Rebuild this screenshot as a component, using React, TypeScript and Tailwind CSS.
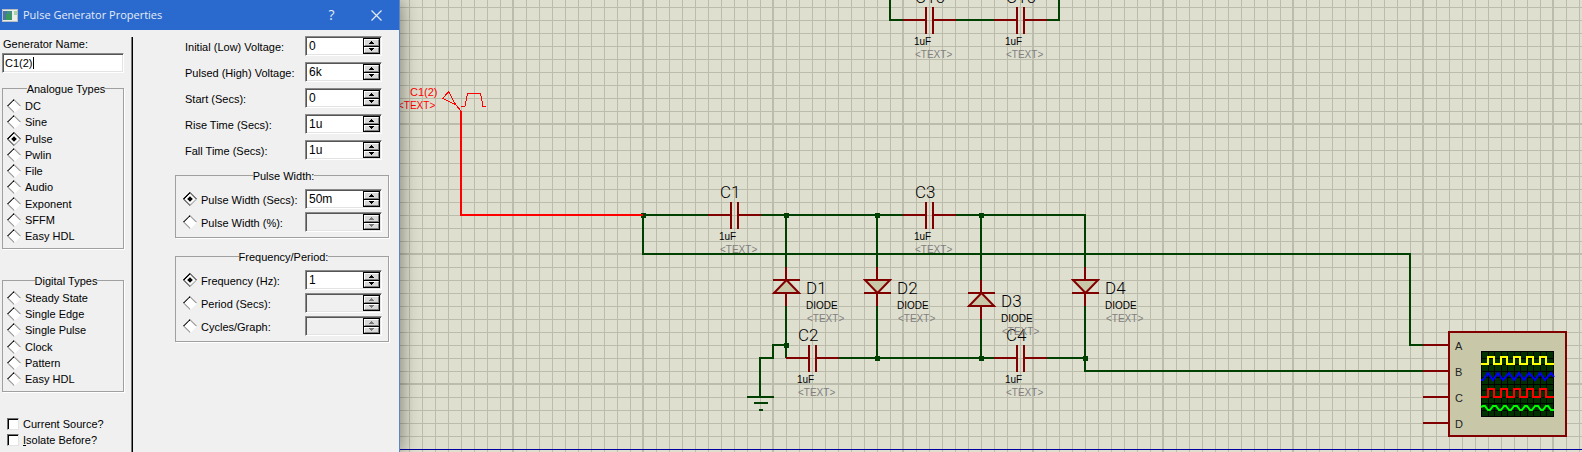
import React, { useId } from 'react';

const FACE = "font-['Liberation_Sans',Arial,sans-serif]";

/* ---------- dialog controls ---------- */

const sunken =
  'border border-t-[#8a8a8a] border-l-[#8a8a8a] border-r-white border-b-white shadow-[inset_1px_1px_0_#555,inset_-1px_-1px_0_#e3e3e3]';

function SpinButton({ up, disabled, label }: { up?: boolean; disabled?: boolean; label: string }) {
  return (
    <button
      type="button"
      aria-label={label}
      disabled={disabled}
      className="flex flex-1 items-center justify-center border border-t-white border-l-white border-r-[#808080] border-b-[#808080] bg-[#d8d8d8]"
    >
      <svg width="7" height="3" viewBox="0 0 7 3" shapeRendering="crispEdges" className={disabled ? 'text-[#777]' : 'text-black'}>
        <path
          d={up ? 'M3 0H4V1H5V2H6V3H1V2H2V1H3Z' : 'M1 0H6V1H5V2H4V3H3V2H2V1H1Z'}
          fill="currentColor"
        />
      </svg>
    </button>
  );
}

function SpinBox({ id, value, disabled }: { id: string; value?: string; disabled?: boolean }) {
  return (
    <div className={`flex h-5 w-[77px] shrink-0 p-px ${sunken} ${disabled ? 'bg-[#f0f0f0]' : 'bg-white'}`}>
      <input
        id={id}
        type="text"
        defaultValue={value}
        disabled={disabled}
        className="min-w-0 flex-1 bg-transparent pb-px pl-0.5 text-[12px] outline-none"
      />
      <div className="flex w-[17px] flex-col gap-px border border-black bg-black">
        <SpinButton up disabled={disabled} label="Increase" />
        <SpinButton disabled={disabled} label="Decrease" />
      </div>
    </div>
  );
}

function Diamond({ id, name, checked }: { id: string; name: string; checked?: boolean }) {
  return (
    <input
      id={id}
      type="radio"
      name={name}
      defaultChecked={checked}
      className="size-[10px] shrink-0 rotate-45 appearance-none border border-t-[#909090] border-r-white border-b-[#909090] border-l-black bg-white checked:bg-black checked:shadow-[inset_0_0_0_2px_#fff]"
    />
  );
}

function Group({ title, className, children }: { title: string; className: string; children: React.ReactNode }) {
  return (
    <fieldset className={`min-w-0 border border-[#a0a0a0] shadow-[1px_1px_0_#fff] ${className}`}>
      <legend className="mx-auto h-[14px] leading-[16px]">{title}</legend>
      {children}
    </fieldset>
  );
}

function TypeGroup({ title, types, selected, className, listClass }: { title: string; types: string[]; selected?: string; className: string; listClass: string }) {
  const id = useId();
  return (
    <Group title={title} className={`pt-[3px] pb-1 pl-1.5 ${className}`}>
      <div className={`flex flex-col justify-between ${listClass}`}>
        {types.map((t, i) => (
          <div key={t} className="flex h-4 items-center gap-1.5">
            <Diamond id={`${id}${i}`} name="generator-type" checked={t === selected} />
            <label htmlFor={`${id}${i}`}>{t}</label>
          </div>
        ))}
      </div>
    </Group>
  );
}

function ValueRow({ label, value }: { label: string; value: string }) {
  const id = useId();
  return (
    <div className="flex items-center justify-between pr-[7px] pl-[10px]">
      <label htmlFor={id} className="pt-0.5">{label}</label>
      <SpinBox id={id} value={value} />
    </div>
  );
}

function ChoiceGroup({ title, name, className, rows }: { title: string; name: string; className: string; rows: [string, string?][] }) {
  const id = useId();
  return (
    <Group title={title} className={`pt-[7px] pr-1.5 pb-[5px] pl-[9px] ${className}`}>
      <div className="flex flex-col gap-[3px]">
        {rows.map(([label, value], i) => (
          <div key={label} className="flex items-center">
            <Diamond id={`${id}r${i}`} name={name} checked={value !== undefined} />
            <label htmlFor={`${id}r${i}`} className="flex-1 pt-0.5 pl-1.5">
              {label}
            </label>
            <SpinBox id={`${id}v${i}`} value={value} disabled={value === undefined} />
          </div>
        ))}
      </div>
    </Group>
  );
}

function Check({ children }: { children: React.ReactNode }) {
  return (
    <label className="flex h-4 items-center gap-1">
      <input
        type="checkbox"
        className="size-3 appearance-none border border-t-[#707070] border-r-[#e3e3e3] border-b-[#e3e3e3] border-l-[#707070] bg-white shadow-[inset_1px_1px_0_#000]"
      />
      <span>{children}</span>
    </label>
  );
}

function Dialog() {
  return (
    <section
      className={`z-10 flex w-[400px] shrink-0 flex-col border-r border-[#5f86c4] bg-[#f0f0f0] text-[11px] leading-[14px] text-black shadow-[0_0_18px_rgba(0,0,0,0.5)] ${FACE}`}
    >
      <header className="flex h-[30px] shrink-0 items-center bg-[#2a69cd] pl-0.5 font-['Open_Sans','Noto_Sans',sans-serif] text-[11px] text-[#e4ecf8]">
        <svg width="16" height="13" viewBox="0 0 16 13" shapeRendering="crispEdges">
          <rect width="16" height="13" fill="#b9bfc0" />
          <rect x="1" y="1" width="14" height="11" fill="#eceee9" />
          <rect x="1" y="2" width="9" height="9" fill="#3f8f86" />
          <rect x="1" y="2" width="4" height="9" fill="#4b76a2" />
          <rect x="4" y="5" width="5" height="6" fill="#3a9a5c" />
          <rect x="12" y="2" width="3" height="4" fill="#a7d3aa" />
        </svg>
        <h1 className="flex-1 pl-[5px]">Pulse Generator Properties</h1>
        <button type="button" aria-label="Help" className="w-[45px] text-[14px]">
          ?
        </button>
        <button type="button" aria-label="Close" className="flex w-[45px] justify-center">
          <svg width="11" height="11" viewBox="0 0 11 11" stroke="currentColor" strokeWidth="1.2">
            <path d="M0.5 0.5L10.5 10.5M10.5 0.5L0.5 10.5" />
          </svg>
        </button>
      </header>
      <form className="flex flex-1 pt-[7px]">
        <div className="w-[131px] pr-[7px] pl-0.5">
          <label htmlFor="generator-name" className="block pl-px">
            Generator Name:
          </label>
          <div className="relative mt-0.5">
            <input
              id="generator-name"
              type="text"
              defaultValue="C1(2)"
              className={`block h-5 w-full bg-white pb-px pl-0.5 text-[11px] outline-none ${sunken}`}
            />
            <span className="absolute top-1 left-[31px] h-3 w-px bg-black" />
          </div>
          <TypeGroup
            title="Analogue Types"
            className="mt-2"
            listClass="h-[146px]"
            selected="Pulse"
            types={['DC', 'Sine', 'Pulse', 'Pwlin', 'File', 'Audio', 'Exponent', 'SFFM', 'Easy HDL']}
          />
          <TypeGroup
            title="Digital Types"
            className="mt-6"
            listClass="h-[97px]"
            types={['Steady State', 'Single Edge', 'Single Pulse', 'Clock', 'Pattern', 'Easy HDL']}
          />
          <div className="mt-6 pl-[5px]">
            <Check>Current Source?</Check>
            <Check>
              <u>I</u>solate Before?
            </Check>
          </div>
        </div>
        <div className="w-0.5 border-l border-[#777] bg-black" />
        <div className="flex-1 pr-[10px] pl-[42px]">
          <div className="-mt-px flex flex-col gap-1.5">
            <ValueRow label="Initial (Low) Voltage:" value="0" />
            <ValueRow label="Pulsed (High) Voltage:" value="6k" />
            <ValueRow label="Start (Secs):" value="0" />
            <ValueRow label="Rise Time (Secs):" value="1u" />
            <ValueRow label="Fall Time (Secs):" value="1u" />
          </div>
          <ChoiceGroup
            title="Pulse Width:"
            name="pulse-width"
            className="mt-2"
            rows={[['Pulse Width (Secs):', '50m'], ['Pulse Width (%):']]}
          />
          <ChoiceGroup
            title="Frequency/Period:"
            name="frequency"
            className="mt-[11px]"
            rows={[['Frequency (Hz):', '1'], ['Period (Secs):'], ['Cycles/Graph:']]}
          />
        </div>
      </form>
    </section>
  );
}

/* ---------- schematic ---------- */

const WIRE = '#004000';
const PART = '#800000';

function Label({ x, y, kind, children }: { x: number; y: number; kind: 'ref' | 'value' | 'text'; children: string }) {
  const cls =
    kind === 'ref'
      ? "font-['Roboto','Liberation_Sans',sans-serif] text-[17px] font-light"
      : `${FACE} text-[10px]`;
  return (
    <text x={x} y={y} className={cls} fill={kind === 'text' ? '#808080' : '#000'}>
      {children}
    </text>
  );
}

function Capacitor({ x, y, name }: { x: number; y: number; name: string }) {
  return (
    <g>
      <path
        d={`M${x - 23} ${y}H${x}M${x + 7} ${y}H${x + 30}M${x} ${y - 13}V${y + 14}M${x + 7} ${y - 13}V${y + 14}`}
        stroke={PART}
        strokeWidth="2"
        fill="none"
        shapeRendering="crispEdges"
      />
      <Label x={x - 11} y={y - 17} kind="ref">{name}</Label>
      <Label x={x - 12} y={y + 25} kind="value">1uF</Label>
      <Label x={x - 11} y={y + 38} kind="text">{'<TEXT>'}</Label>
    </g>
  );
}

function Diode({ x, y, name, down }: { x: number; y: number; name: string; down?: boolean }) {
  const base = down ? y : y + 13;
  const tip = down ? y + 13 : y;
  return (
    <g>
      <path d={`M${x - 12} ${base}H${x + 13}L${x + 0.5} ${tip}Z`} fill="#c8c8a8" stroke={PART} strokeWidth="2" />
      <path
        d={`M${x} ${y - 13}V${y}M${x} ${y + 13}V${y + 26}M${x - 13} ${tip}H${x + 14}M${x - 13} ${base}H${x + 14}`}
        stroke={PART}
        strokeWidth="2"
        fill="none"
        shapeRendering="crispEdges"
      />
      <Label x={x + 20} y={y + 14} kind="ref">{name}</Label>
      <Label x={x + 20} y={y + 29} kind="value">DIODE</Label>
      <Label x={x + 21} y={y + 42} kind="text">{'<TEXT>'}</Label>
    </g>
  );
}

const nodes = [
  [643, 215], [786, 215], [877, 215], [981, 215],
  [786, 345], [877, 358], [981, 358], [1085, 358],
];

const pins: [string, number][] = [['A', 345], ['B', 371], ['C', 397], ['D', 423]];

function Scope() {
  const square = (low: number, high: number) =>
    `M1481 ${low}H1488V${high}H1494V${low}H1501V${high}H1507V${low}H1514V${high}H1520V${low}H1527V${high}H1533V${low}H1540V${high}H1546V${low}H1554`;
  return (
    <g>
      <rect x="1449" y="332" width="117" height="104" fill="#c8c8a8" stroke={PART} strokeWidth="2" shapeRendering="crispEdges" />
      {pins.map(([name, y]) => (
        <g key={name}>
          <path d={`M1423 ${y}H1449`} stroke={PART} strokeWidth="2" shapeRendering="crispEdges" />
          <text x="1455" y={y + 5} className="font-['Liberation_Sans',sans-serif] text-[11px]" fill="#222">
            {name}
          </text>
        </g>
      ))}
      <rect x="1481" y="351" width="73" height="66" fill="#003000" />
      <path
        d="M1481.5 351V417M1488.5 351V417M1494.5 351V417M1501.5 351V417M1507.5 351V417M1514.5 351V417M1520.5 351V417M1527.5 351V417M1533.5 351V417M1540.5 351V417M1546.5 351V417M1553.5 351V417M1481 351.5H1554M1481 358.5H1554M1481 364.5H1554M1481 371.5H1554M1481 377.5H1554M1481 384.5H1554M1481 390.5H1554M1481 397.5H1554M1481 403.5H1554M1481 410.5H1554M1481 416.5H1554"
        stroke="#000"
        fill="none"
      />
      <g fill="none" strokeWidth="2">
        <path d={square(364, 357)} stroke="#ffff00" shapeRendering="crispEdges" />
        <path
          d="M1481 380L1483 380L1488 373L1493 380L1498 373L1503 380L1509 373L1514 380L1519 373L1524 380L1529 373L1535 380L1540 373L1545 380L1551 373L1554 377"
          stroke="#0000ff"
        />
        <path d={square(397, 389)} stroke="#ff0000" shapeRendering="crispEdges" />
        <path
          d="M1481 407L1483 406H1485L1488 410H1490L1493 406H1496L1499 410H1501L1504 406H1506L1509 410H1511L1514 406H1517L1520 410H1522L1525 406H1527L1530 410H1532L1535 406H1538L1541 410H1543L1546 406H1548L1551 410H1554"
          stroke="#00ff00"
        />
      </g>
    </g>
  );
}

function Schematic() {
  return (
    <main className="min-w-0 flex-1 bg-[#dfdfcf]">
      <svg className="block h-full w-full" role="img" aria-label="Voltage multiplier schematic">
        <defs>
          <pattern id="minor" x="6" y="7" width="13" height="13" patternUnits="userSpaceOnUse">
            <path d="M0 0H13V1H1V13H0Z" fill="#bcbcac" shapeRendering="crispEdges" />
          </pattern>
          <pattern id="major" x="122" y="123" width="130" height="130" patternUnits="userSpaceOnUse">
            <path d="M0 0H130V2H2V130H0Z" fill="#bcbcac" shapeRendering="crispEdges" />
          </pattern>
        </defs>
        <g transform="translate(-400 0)">
          <g transform="translate(390 0)">
            <rect width="100%" height="100%" x="10" fill="url(#minor)" />
            <rect width="100%" height="100%" x="10" fill="url(#major)" />
          </g>
          <path d="M400 449.500H9000" stroke="#0000a0" shapeRendering="crispEdges" />
          <path
            d="M890 0V20H903M956 20H994M1047 20H1059V0M643 215H708M761 215H903M956 215H1085V267M643 215V254H1410V345H1423M786 215V267M786 306V358M786 345H773V358H760V396M877 215V267M877 306V358M981 215V280M981 319V358M839 358H994M1047 358H1085M1085 306V371H1423M747 397H774M754 403H768M759 410H763"
            stroke={WIRE}
            strokeWidth="2"
            fill="none"
            shapeRendering="crispEdges"
          />
          {nodes.map(([x, y]) => (
            <rect key={`${x}-${y}`} x={x - 2} y={y - 2} width="5" height="5" fill={WIRE} />
          ))}
          <path d="M461 111V215H643" stroke="#ff0000" strokeWidth="2" fill="none" shapeRendering="crispEdges" />
          <g stroke="#ff0000" fill="none" shapeRendering="crispEdges">
            <path d="M443 98.500L448.500 91.500L455.500 104.500ZM455.500 104.500L461 111" />
            <path d="M461 106.500H465L467.500 93.500H480.500L483 106.500H486" />
          </g>
          <text x="410" y="96" fill="#ff0000" className={`${FACE} text-[11px]`}>C1(2)</text>
          <text x="398" y="109" fill="#ff0000" className={`${FACE} text-[10px]`}>{'<TEXT>'}</text>

          <Capacitor x={926} y={20} name="C16" />
          <Capacitor x={1017} y={20} name="C16" />
          <Capacitor x={731} y={215} name="C1" />
          <Capacitor x={926} y={215} name="C3" />
          <Capacitor x={809} y={358} name="C2" />
          <Capacitor x={1017} y={358} name="C4" />
          <Diode x={786} y={280} name="D1" />
          <Diode x={877} y={280} name="D2" down />
          <Diode x={981} y={293} name="D3" />
          <Diode x={1085} y={280} name="D4" down />
          <Scope />
        </g>
      </svg>
    </main>
  );
}

export default function App() {
  return (
    <div className="flex h-screen overflow-hidden">
      <Dialog />
      <Schematic />
    </div>
  );
}
